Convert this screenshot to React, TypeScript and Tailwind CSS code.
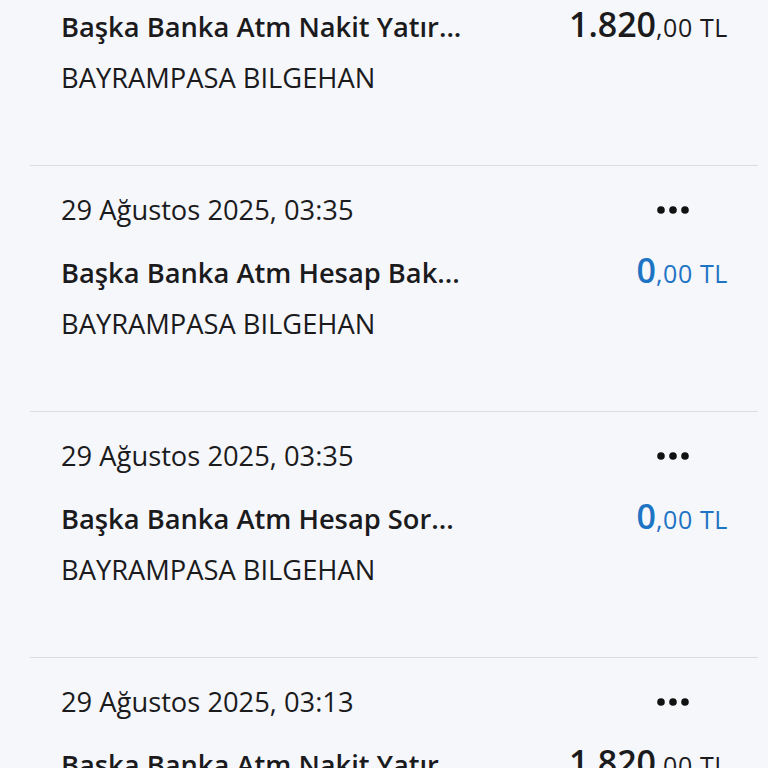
const rows = [
  { date: "29 Ağustos 2025, 03:35", title: "Başka Banka Atm Nakit Yatır...", whole: "1.820", blue: false },
  { date: "29 Ağustos 2025, 03:35", title: "Başka Banka Atm Hesap Bak...", whole: "0", blue: true },
  { date: "29 Ağustos 2025, 03:35", title: "Başka Banka Atm Hesap Sor...", whole: "0", blue: true },
  { date: "29 Ağustos 2025, 03:13", title: "Başka Banka Atm Nakit Yatır...", whole: "1.820", blue: false },
];

function Dots() {
  return (
    <svg width="34" height="10" viewBox="0 0 34 10" className="mr-[38px]">
      <circle cx="5" cy="5" r="3.8" fill="#111" />
      <circle cx="17" cy="5" r="3.8" fill="#111" />
      <circle cx="29" cy="5" r="3.8" fill="#111" />
    </svg>
  );
}

export default function App() {
  return (
    <div className="h-[768px] w-[768px] overflow-hidden bg-[#f6f7fb] font-['Open_Sans',sans-serif] text-[#1b1b1d]">
      <div className="-mt-[80px]">
        {rows.map((r, i) => (
          <div key={i} className="ml-[30px] mr-[10px] border-b border-[#dcdde2] pl-[31px] pr-[30px] pt-[26px] pb-[69px]">
            <div className="flex h-[36px] items-center justify-between">
              <span className="text-[27.3px] leading-[36px]">{r.date}</span>
              <Dots />
            </div>
            <div className="mt-[24px] flex h-[36px] items-baseline justify-between">
              <span className="text-[27.3px] font-semibold leading-[36px]">{r.title}</span>
              <span className={r.blue ? "text-[#1e74c4]" : "text-[#1b1b1d]"}>
                <span className="text-[34px] font-semibold leading-[36px]">{r.whole}</span>
                <span className="text-[25px] tracking-[0.6px] leading-[36px]">,00 TL</span>
              </span>
            </div>
            <div className="mt-[18px] text-[27.3px] leading-[36px]">BAYRAMPASA BILGEHAN</div>
          </div>
        ))}
      </div>
    </div>
  );
}
